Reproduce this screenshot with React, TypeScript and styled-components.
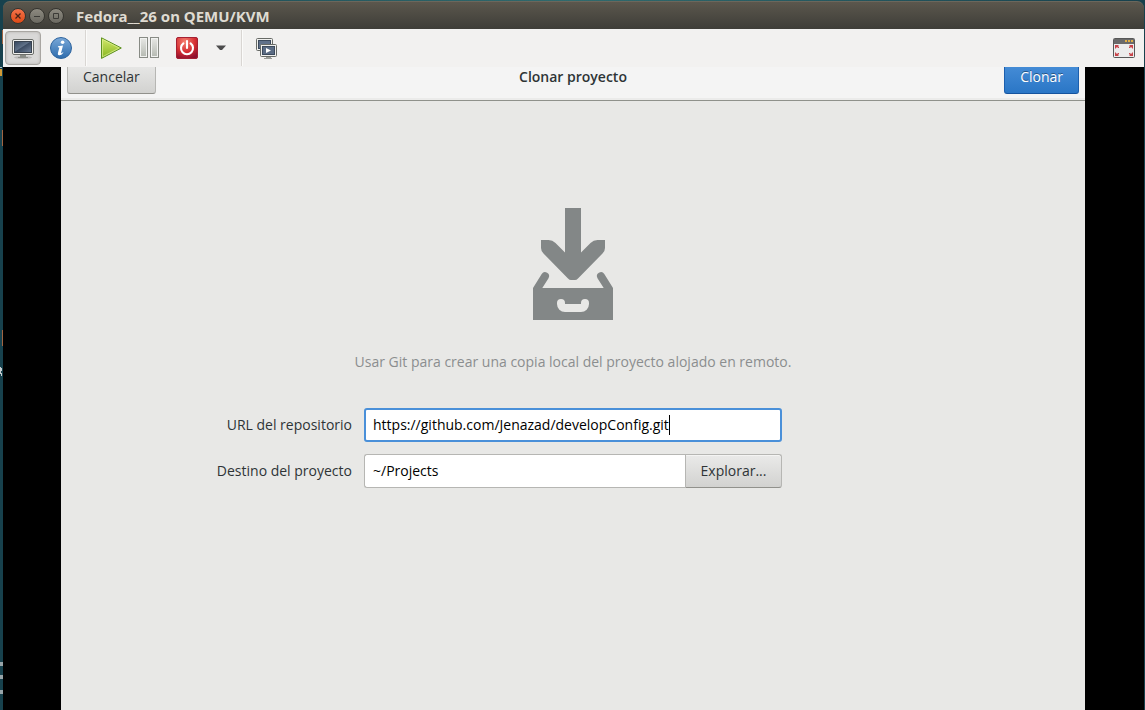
import React, { useState } from 'react';
import styled, { createGlobalStyle, css } from 'styled-components';

const GlobalStyle = createGlobalStyle`
  *, *::before, *::after { box-sizing: border-box; }
  html, body { margin: 0; padding: 0; background: #17414d; }
  body, button, input { font-family: 'Open Sans', 'Noto Sans', sans-serif; font-size: 14px; }
`;

const Desktop = styled.div`
  position: relative;
  display: flex;
  min-height: 100vh;
  padding: 1px 1px 0 3px;
  background: linear-gradient(90deg, #17414d, #2f6a6d 50%, #17414d);
`;

const DesktopEdge = styled.svg`
  position: absolute;
  left: 0;
  top: 0;
`;

const Window = styled.div`
  flex: 1;
  display: flex;
  flex-direction: column;
  min-width: 0;
`;

const TitleBar = styled.header`
  display: flex;
  align-items: center;
  gap: 3px;
  height: 28px;
  padding: 0 7px;
  border-top: 1px solid #6b675c;
  border-radius: 7px 7px 0 0;
  background: linear-gradient(#5b574d, #3e3d38);
`;

const WindowButton = styled.button<{ $close?: boolean }>`
  display: flex;
  width: 16px;
  height: 16px;
  padding: 0;
  border: 1px solid #35342f;
  border-radius: 50%;
  background: ${p => (p.$close ? 'linear-gradient(#f4734b, #df4a16)' : 'linear-gradient(#8d8a80, #6b6961)')};
  svg { display: block; }
`;

const WindowTitle = styled.h1`
  margin: 0 0 0 9px;
  color: #dfdbd2;
  font-family: 'Noto Sans', 'Open Sans', sans-serif;
  font-size: 15px;
  line-height: 20px;
  font-weight: 700;
`;

const Toolbar = styled.div`
  display: flex;
  align-items: center;
  height: 38px;
  padding: 0 5px 0 2px;
  background: #f2f1f0;
`;

const ToolButton = styled.button<{ $active?: boolean; $narrow?: boolean }>`
  display: flex;
  align-items: center;
  justify-content: center;
  width: ${p => (p.$narrow ? '30px' : '38px')};
  height: 34px;
  padding: 0;
  border: 0;
  background: transparent;
  ${p => p.$active && css`
    width: 36px;
    margin-right: 1px;
    border: 1px solid #a9a6a2;
    border-radius: 4px;
    background: #d9d8d7;
    box-shadow: inset 0 0 3px #b3b0ad;
  `}
`;

const ToolSeparator = styled.span`
  width: 2px;
  height: 36px;
  margin: 0 5px;
  border-left: 1px solid #d9d6d3;
  border-right: 1px solid #fbfbfa;
`;

const Spacer = styled.span`
  flex: 1;
`;

const Console = styled.main`
  flex: 1;
  display: flex;
  padding: 0 59px 0 58px;
  background: #000;
`;

const Guest = styled.section`
  flex: 1;
  min-width: 0;
  background: #e8e8e6;
`;

const DialogHeader = styled.header`
  display: grid;
  grid-template-columns: 1fr auto 1fr;
  align-content: end;
  align-items: center;
  height: 34px;
  padding: 0 6px 6px;
  overflow: hidden;
  border-bottom: 1px solid #8f918b;
  background: #f4f4f4;
  box-shadow: inset 0 -2px 0 #ebebea;
`;

const DialogTitle = styled.h2`
  margin: 0;
  color: #2e3436;
  font-size: 14px;
  line-height: 20px;
  font-weight: 600;
`;

const Button = styled.button<{ $primary?: boolean; $end?: boolean; $joined?: boolean }>`
  justify-self: ${p => (p.$end ? 'end' : 'start')};
  height: 34px;
  padding: 0 15px;
  border: 1px solid #b6b6b3;
  border-bottom-color: #91918c;
  border-radius: 3px;
  background: linear-gradient(#eaeae9, #d2d2d0);
  box-shadow: inset 0 1px #f4f4f3;
  color: #2e3436;
  line-height: 20px;
  white-space: nowrap;
  ${p => p.$primary && css`
    border-color: #1c5fae;
    border-bottom-color: #15539e;
    background: linear-gradient(#4a90d9, #2a76c6);
    box-shadow: none;
    color: #fff;
    text-shadow: 0 -1px rgba(0, 0, 0, 0.4);
  `}
  ${p => p.$joined && css`
    width: 97px;
    padding: 0;
    border-radius: 0 3px 3px 0;
  `}
`;

const Body = styled.form`
  display: flex;
  flex-direction: column;
  align-items: center;
  padding-top: 107px;
`;

const Hint = styled.p`
  margin: 32px 0 36px;
  color: #8b8e8f;
  line-height: 20px;
`;

const Fields = styled.div`
  display: grid;
  grid-template-columns: 1fr 418px 1fr;
  gap: 12px;
  align-items: center;
  width: 100%;
`;

const Label = styled.label`
  grid-column: 1;
  justify-self: end;
  color: #2e3436;
  line-height: 20px;
`;

const Field = styled.div`
  position: relative;
  display: flex;
`;

const Entry = styled.input<{ $focused?: boolean; $joined?: boolean }>`
  flex: 1;
  min-width: 0;
  height: 34px;
  padding: 0 8px 1px;
  border: 1px solid #b6b6b3;
  border-radius: 3px;
  outline: 0;
  background: #fff;
  color: #000;
  ${p => p.$focused && css`
    padding: 0 7px 1px;
    border: 2px solid #4a90d9;
  `}
  ${p => p.$joined && css`
    border-right: 0;
    border-radius: 3px 0 0 3px;
  `}
`;

const Caret = styled.span`
  position: absolute;
  left: 305px;
  top: 7px;
  width: 1px;
  height: 20px;
  background: #000;
`;

const MonitorIcon = () => (
  <svg width="24" height="24" viewBox="0 0 24 24" aria-hidden="true">
    <defs>
      <linearGradient id="screen" x2="1" y2="1">
        <stop stopColor="#33455c" /><stop offset=".45" stopColor="#607188" /><stop offset=".5" stopColor="#3c4c63" /><stop offset="1" stopColor="#71819a" />
      </linearGradient>
    </defs>
    <ellipse cx="12" cy="21.5" rx="9" ry="1.5" fill="#000" opacity=".15" />
    <rect x="1.5" y="3.5" width="21" height="15" rx="1.5" fill="#f0f0ee" stroke="#6c6e6a" />
    <rect x="3.5" y="5.5" width="17" height="11" fill="url(#screen)" stroke="#38424f" />
    <path d="M9 19h6v2h2v1H7v-1h2z" fill="#8b8d88" />
  </svg>
);

const InfoIcon = () => (
  <svg width="24" height="24" viewBox="0 0 24 24" aria-hidden="true">
    <defs>
      <linearGradient id="info" x2="0" y2="1"><stop stopColor="#79a8d8" /><stop offset="1" stopColor="#2e6cad" /></linearGradient>
    </defs>
    <circle cx="12" cy="12" r="10.5" fill="url(#info)" stroke="#2f659f" />
    <circle cx="13.6" cy="6.3" r="1.8" fill="#fff" />
    <path d="M9 10.2l5-.8-1.9 7.3c-.2.9.4.8 1.9-.5l.4.6c-1.6 2-3 2.6-4.3 2.4-1.2-.2-1.5-1-1.1-2.4l1.4-5.3-1.5-.3z" fill="#fff" />
  </svg>
);

const PlayIcon = () => (
  <svg width="24" height="24" viewBox="0 0 24 24" aria-hidden="true">
    <defs>
      <linearGradient id="play" x2="0" y2="1"><stop stopColor="#d3e86c" /><stop offset="1" stopColor="#86b51f" /></linearGradient>
    </defs>
    <path d="M2.5 1.8v20.6L22.3 12z" fill="url(#play)" stroke="#5d9122" strokeLinejoin="round" />
    <path d="M3.5 3.4v17.4L20.2 12z" fill="none" stroke="#e0ef98" strokeWidth=".7" />
  </svg>
);

const PauseIcon = () => (
  <svg width="24" height="24" viewBox="0 0 24 24" aria-hidden="true">
    <defs>
      <linearGradient id="pause" x2="0" y2="1"><stop stopColor="#e8e9e6" /><stop offset="1" stopColor="#b4b8b0" /></linearGradient>
    </defs>
    {[2.5, 13.5].map(x => (
      <g key={x}>
        <rect x={x} y="1.5" width="8" height="20" fill="url(#pause)" stroke="#888b85" />
        <rect x={x + 1} y="2.5" width="6" height="18" fill="none" stroke="#f1f2f0" />
      </g>
    ))}
  </svg>
);

const PowerIcon = () => (
  <svg width="24" height="24" viewBox="0 0 24 24" aria-hidden="true">
    <defs>
      <radialGradient id="power" cx=".4" cy=".2" r=".85">
        <stop stopColor="#f58070" /><stop offset=".6" stopColor="#d32b30" /><stop offset="1" stopColor="#8c1030" />
      </radialGradient>
    </defs>
    <rect x="1.5" y="1.5" width="21" height="21" rx="1.5" fill="url(#power)" stroke="#a52032" />
    <path d="M8.4 7.4a6 6 0 1 0 7.2 0" fill="none" stroke="#fff" strokeWidth="2.1" strokeLinecap="round" />
    <path d="M12 5v7" stroke="#fff" strokeWidth="2.1" strokeLinecap="round" />
  </svg>
);

const ArrowIcon = () => (
  <svg width="10" height="6" viewBox="0 0 10 6" aria-hidden="true">
    <path d="M0 .5h10L6 5H4z" fill="#4c4c4c" />
  </svg>
);

const SnapshotIcon = () => (
  <svg width="24" height="24" viewBox="0 0 24 24" aria-hidden="true">
    <rect x="1.5" y="2.5" width="16" height="12" rx="1" fill="#f0f0ee" stroke="#676a66" />
    <rect x="3.5" y="4.5" width="12" height="8" fill="#60718a" stroke="#3c4a5d" />
    <rect x="5.5" y="8.5" width="16" height="12" rx="1" fill="#f0f0ee" stroke="#676a66" />
    <rect x="7.5" y="10.5" width="12" height="8" fill="#5b6c84" stroke="#3c4a5d" />
    <path d="M11 12v5l5-2.5z" fill="#fff" />
    <path d="M11 21h5v1h1v1H9v-1h2z" fill="#9a9c98" />
  </svg>
);

const FullscreenIcon = () => (
  <svg width="24" height="24" viewBox="0 0 24 24" aria-hidden="true">
    <rect x="1.5" y="2.5" width="21" height="19" rx="1" fill="#ececec" stroke="#585858" />
    <path d="M2 3h20v5H2z" fill="#6a6a6a" />
    <path d="M13 4h2v2h-2zM16 4h2v2h-2zM19 4h2v2h-2z" fill="#e0ad45" />
    <path d="M3 9h4l-1 1 1 1v1H6l-1-1-2 2zM21 9h-4l1 1-1 1v1h1l1-1 2 2zM3 20h4l-1-1 1-1v-1H6l-1 1-2-2zM21 20h-4l1-1-1-1v-1h1l1 1 2-2z" fill="#c8444a" />
  </svg>
);

const DownloadIcon = () => (
  <svg width="80" height="112" viewBox="0 0 80 112" fill="#838787" aria-hidden="true">
    <path d="M32 0h16v44.5l9.500-9.500q3-3 7-3H72v8q0 3-2.500 5.500L45 70.500Q43.500 72 42 72h-4q-1.500 0-3-1.500L10.500 45.500Q8 43 8 40v-8h7.500q4 0 7 3l9.500 9.500z" />
    <path d="M0 80L8.700 66a4 4 0 0 1 6.800 4.200L9.300 80h61.400l-6.200-9.800A4 4 0 0 1 71.300 66L80 80v32H0zM24 95v1a8 8 0 0 0 8 8h16a8 8 0 0 0 8-8v-1a4 4 0 0 0-8 0v1H32v-1a4 4 0 0 0-8 0z" fillRule="evenodd" />
  </svg>
);

export default function App() {
  const [url, setUrl] = useState('https://github.com/Jenazad/developConfig.git');
  const [target, setTarget] = useState('~/Projects');
  return (
    <>
      <GlobalStyle />
      <Desktop>
        <DesktopEdge width="3" height="710" viewBox="0 0 3 710" aria-hidden="true">
          <path d="M0 0h3v710H0z" fill="#17414d" />
          <path d="M0 69h2v7H0z" fill="#d39a35" />
          <path d="M0 67h2v1H0z" fill="#b9c4c6" />
          <path d="M2 30h1v14H2zM2 130h1v16H2zM2 330h1v16H2z" fill="#a06442" />
          <path d="M0 367h1v1h1v3H1v2h1v3H1v-2H0z" fill="#c6cdd0" />
          <path d="M0 662h3v4H0zM0 675h3v4H0zM0 690h3v4H0z" fill="#98a5a9" />
        </DesktopEdge>
        <Window>
          <TitleBar>
            <WindowButton $close aria-label="Close">
              <svg width="14" height="14"><path d="M4.5 4.5l5 5m0-5l-5 5" stroke="#4a2316" strokeWidth="1.3" /></svg>
            </WindowButton>
            <WindowButton aria-label="Minimize">
              <svg width="14" height="14"><path d="M4 7.5h6" stroke="#3c3b37" /></svg>
            </WindowButton>
            <WindowButton aria-label="Maximize">
              <svg width="14" height="14"><path d="M4.5 4.5h5v5h-5z" stroke="#3c3b37" fill="none" /></svg>
            </WindowButton>
            <WindowTitle>Fedora__26 on QEMU/KVM</WindowTitle>
          </TitleBar>
          <Toolbar>
            <ToolButton $active aria-label="Console"><MonitorIcon /></ToolButton>
            <ToolButton aria-label="Details"><InfoIcon /></ToolButton>
            <ToolSeparator />
            <ToolButton aria-label="Run"><PlayIcon /></ToolButton>
            <ToolButton aria-label="Pause"><PauseIcon /></ToolButton>
            <ToolButton aria-label="Shut down"><PowerIcon /></ToolButton>
            <ToolButton $narrow aria-label="Shut down options"><ArrowIcon /></ToolButton>
            <ToolSeparator />
            <ToolButton aria-label="Snapshots"><SnapshotIcon /></ToolButton>
            <Spacer />
            <ToolButton $narrow aria-label="Full screen"><FullscreenIcon /></ToolButton>
          </Toolbar>
          <Console>
            <Guest>
              <DialogHeader>
                <Button type="button">Cancelar</Button>
                <DialogTitle>Clonar proyecto</DialogTitle>
                <Button type="submit" form="clone" $primary $end>Clonar</Button>
              </DialogHeader>
              <Body id="clone" onSubmit={e => e.preventDefault()}>
                <DownloadIcon />
                <Hint>Usar Git para crear una copia local del proyecto alojado en remoto.</Hint>
                <Fields>
                  <Label htmlFor="url">URL del repositorio</Label>
                  <Field>
                    <Entry id="url" $focused value={url} onChange={e => setUrl(e.target.value)} />
                    <Caret />
                  </Field>
                  <Label htmlFor="target">Destino del proyecto</Label>
                  <Field>
                    <Entry id="target" $joined value={target} onChange={e => setTarget(e.target.value)} />
                    <Button type="button" $joined>Explorar...</Button>
                  </Field>
                </Fields>
              </Body>
            </Guest>
          </Console>
        </Window>
      </Desktop>
    </>
  );
}
